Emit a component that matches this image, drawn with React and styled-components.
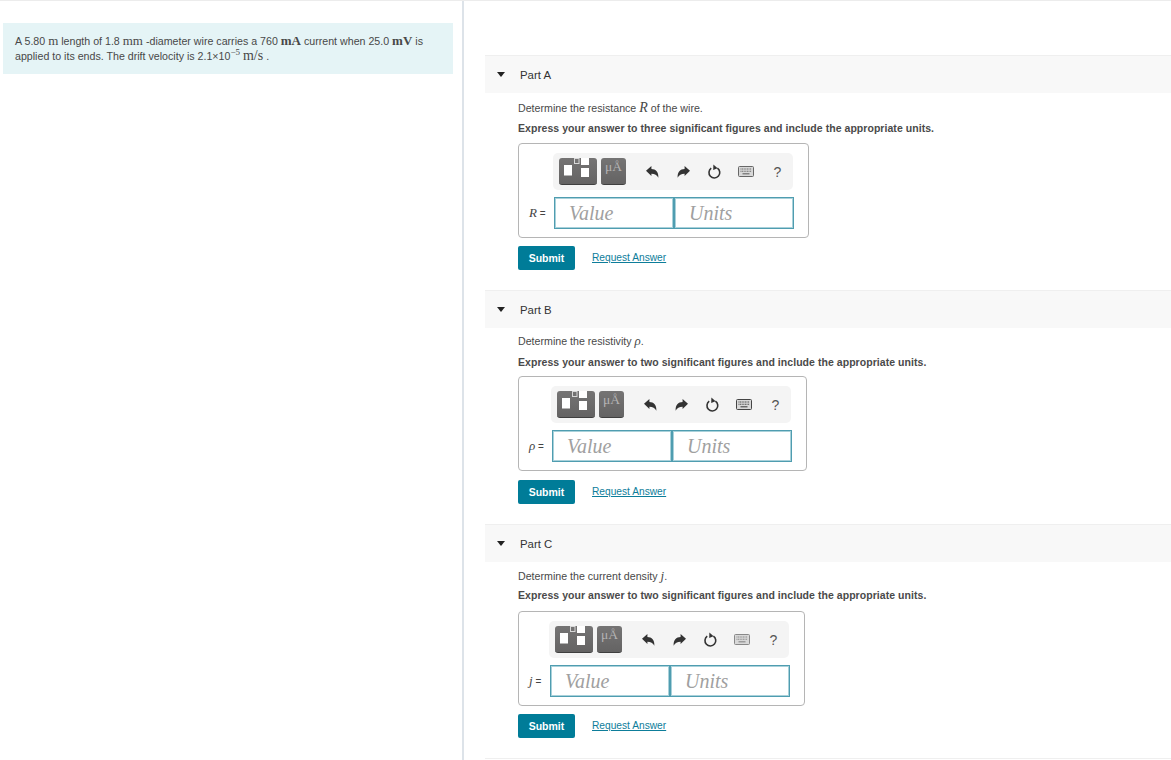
import React from 'react';
import styled, { createGlobalStyle } from 'styled-components';

const GlobalStyle = createGlobalStyle`
  html, body {
    margin: 0;
    padding: 0;
    background: #fff;
    overflow: hidden;
  }
  body {
    font-family: "Liberation Sans", Arial, sans-serif;
    color: #3c3c3c;
  }
`;

const Page = styled.div`
  display: grid;
  grid-template-columns: 464px 1fr;
  width: 1171px;
  height: 760px;
  box-sizing: border-box;
  border-top: 1px solid #ececec;
  overflow: hidden;
`;

const LeftPane = styled.div`
  box-sizing: border-box;
  padding: 22px 9px 0 3px;
  border-right: 2px solid #dde3e9;
`;

const Intro = styled.div`
  box-sizing: border-box;
  height: 51px;
  padding: 11px 12px 0;
  background: #e5f4f6;
  font-size: 10.65px;
  line-height: 15px;
  color: #484848;
`;

const M = styled.span`
  font-family: "Liberation Serif", serif;
  font-size: ${p => p.$size || 13}px;
  line-height: 0;
  font-weight: ${p => (p.$bold ? 700 : 400)};
  font-style: ${p => (p.$italic ? 'italic' : 'normal')};
`;

const Sup = styled.sup`
  font-size: 9px;
  line-height: 0;
  font-family: "Liberation Serif", serif;
`;

const RightPane = styled.div`
  padding: 54px 0 0 21px;
`;

const Part = styled.section`
  height: ${p => p.$height}px;
`;

const PartHeader = styled.div`
  display: flex;
  align-items: center;
  height: 37px;
  border-top: 1px solid #efefef;
  background: #f8f8f8;
  font-size: 11.4px;
  color: #333;
`;

const Caret = styled.span`
  width: 0;
  height: 0;
  margin: 0 15px 0 12px;
  border-left: 4.5px solid transparent;
  border-right: 4.5px solid transparent;
  border-top: 5px solid #222;
`;

const PartBody = styled.div`
  padding: ${p => p.$top}px 0 0 33px;
`;

const Question = styled.div`
  height: 14px;
  font-size: 10.65px;
  line-height: 14px;
  color: #484848;
`;

const Instruction = styled.div`
  margin: ${p => p.$above}px 0 ${p => p.$below}px;
  font-size: 10.5px;
  line-height: 14px;
  font-weight: 700;
  color: #4a4a4a;
  letter-spacing: 0.05px;
`;

// the box hugs its content, so it narrows along with the label column
const AnswerBox = styled.div`
  box-sizing: border-box;
  width: ${p => p.$indent + 256}px;
  height: 95px;
  padding: 9px 0 0 ${p => p.$indent}px;
  border: 1px solid #b5b5b5;
  border-radius: 4px;
`;

const Toolbar = styled.div`
  display: flex;
  align-items: center;
  box-sizing: border-box;
  width: 240px;
  height: 37px;
  margin-left: -1px;
  padding-left: 6px;
  background: #f4f4f4;
  border-radius: 5px;
`;

const DarkButton = styled.div`
  display: flex;
  justify-content: center;
  box-sizing: border-box;
  width: ${p => p.$width}px;
  height: 27px;
  margin-right: 4px;
  border-radius: 3px;
  background: linear-gradient(#757474, #646363);
  border-bottom: 1px solid #3f3f3f;
  color: #b4b4b4;
  font-family: "Liberation Serif", serif;
  font-size: 13.5px;
  line-height: 17px;
`;

const ToolIcons = styled.div`
  display: flex;
  align-items: center;
  flex: 1;
  padding-left: 6.5px;
`;

const ToolIcon = styled.span`
  display: flex;
  justify-content: center;
  align-items: center;
  width: 31.3px;
  height: 26px;
  color: ${p => p.$color || '#333'};
  font-size: 14px;
`;

const Row = styled.div`
  display: flex;
  align-items: center;
  margin-top: 7px;
  margin-left: ${p => -p.$indent}px;
`;

const RowLabel = styled.div`
  box-sizing: border-box;
  width: ${p => p.$indent}px;
  padding-left: 10px;
  font-size: 10px;
  color: #444;
  white-space: nowrap;
`;

const LabelVar = styled.span`
  font-family: "Liberation Serif", serif;
  font-style: italic;
  font-size: 13px;
`;

const Field = styled.div`
  box-sizing: border-box;
  width: 120px;
  height: 32px;
  padding-left: 14px;
  border: 1px solid #4f9db0;
  box-shadow: inset 0 0 0 1px #a9d1da;
  font-family: "Liberation Serif", serif;
  font-style: italic;
  font-size: 20px;
  line-height: 31px;
  color: #a0a0a0;
`;

const Actions = styled.div`
  display: flex;
  align-items: center;
  margin-top: ${p => p.$gap}px;
`;

const Submit = styled.button`
  width: 57px;
  height: 24px;
  padding: 0;
  border: 0;
  border-radius: 2px;
  background: #007c98;
  color: #fff;
  font-family: "Liberation Sans", Arial, sans-serif;
  font-size: 10.5px;
  font-weight: 700;
`;

const RequestLink = styled.a`
  margin: 0 0 2px 17px;
  color: #0d7d9a;
  font-size: 10.2px;
  text-decoration: underline;
`;

const BottomRule = styled.div`
  border-top: 1px solid #efefef;
`;

function TemplateIcon() {
  return (
    <svg width="37" height="26" viewBox="0 0 37 26">
      <rect x="5" y="7" width="8" height="10.5" fill="#fff" />
      <rect x="15.5" y="0.5" width="4.5" height="5" fill="none" stroke="#d8d8d8" strokeWidth="1" />
      <rect x="22" y="0" width="8" height="7" fill="#fff" />
      <rect x="22" y="10" width="8" height="9" fill="#fff" />
    </svg>
  );
}

function UndoIcon({ flip }) {
  return (
    <svg width="13" height="12" viewBox="0 0 12 11" style={flip ? { transform: 'scaleX(-1)' } : undefined}>
      <path d="M0 4.4 L5 0 V2.7 C9 2.8 11.8 5.4 11.4 10.8 C10.2 8 8 7 5 7 V9.2 Z" fill="#333" />
    </svg>
  );
}

function ResetIcon() {
  return (
    <svg width="15" height="16" viewBox="0 0 15 16">
      <path d="M4.2 4.2 A5.4 5.4 0 1 0 10.4 4.1" fill="none" stroke="#333" strokeWidth="1.6" />
      <path d="M6.4 0.6 L10.6 4.2 L6.2 6 Z" fill="#333" />
    </svg>
  );
}

function KeyboardIcon({ color }) {
  return (
    <svg width="16" height="11" viewBox="0 0 16 11">
      <rect x="0.5" y="0.5" width="15" height="10" rx="1" fill="#d8d8d8" stroke={color} />
      <path d="M2.5 3h11M2.5 5.2h11" stroke={color} strokeWidth="1.1" strokeDasharray="1 .6" />
      <path d="M4.5 7.8h7" stroke={color} strokeWidth="1.1" />
    </svg>
  );
}

const parts = [
  {
    title: 'Part A',
    height: 235,
    question: <>Determine the resistance <M $italic $size={14}>R</M> of the wire.</>,
    instruction: 'Express your answer to three significant figures and include the appropriate units.',
    label: 'R',
    indent: 35,
    top: 8,
    above: 6,
    below: 8,
    gap: 8,
    keyColor: '#666',
  },
  {
    title: 'Part B',
    height: 234,
    question: <>Determine the resistivity <M $italic>ρ</M>.</>,
    instruction: 'Express your answer to two significant figures and include the appropriate units.',
    label: 'ρ',
    indent: 33,
    top: 6,
    above: 7,
    below: 7,
    gap: 9,
    keyColor: '#444',
  },
  {
    title: 'Part C',
    height: 234,
    question: <>Determine the current density <M $italic>j</M>.</>,
    instruction: 'Express your answer to two significant figures and include the appropriate units.',
    label: 'j',
    indent: 31,
    top: 7,
    above: 5,
    below: 9,
    gap: 8,
    keyColor: '#888',
  },
];

export default function App() {
  return (
    <>
      <GlobalStyle />
      <Page>
        <LeftPane>
          <Intro>
            A 5.80 <M>m</M> length of 1.8 <M>mm</M> -diameter wire carries a 760 <M $bold>mA</M> current when 25.0 <M $bold>mV</M> is
            <br />
            applied to its ends. The drift velocity is 2.1×10<Sup>−5</Sup> <M $size={14}>m/s</M> .
          </Intro>
        </LeftPane>
        <RightPane>
          {parts.map(part => (
            <Part key={part.title} $height={part.height}>
              <PartHeader>
                <Caret />
                {part.title}
              </PartHeader>
              <PartBody $top={part.top}>
                <Question>{part.question}</Question>
                <Instruction $above={part.above} $below={part.below}>{part.instruction}</Instruction>
                <AnswerBox $indent={part.indent}>
                  <Toolbar>
                    <DarkButton $width={39}>
                      <TemplateIcon />
                    </DarkButton>
                    <DarkButton $width={26}>μÅ</DarkButton>
                    <ToolIcons>
                      <ToolIcon><UndoIcon /></ToolIcon>
                      <ToolIcon><UndoIcon flip /></ToolIcon>
                      <ToolIcon><ResetIcon /></ToolIcon>
                      <ToolIcon><KeyboardIcon color={part.keyColor} /></ToolIcon>
                      <ToolIcon $color="#555">?</ToolIcon>
                    </ToolIcons>
                  </Toolbar>
                  <Row $indent={part.indent}>
                    <RowLabel $indent={part.indent}>
                      <LabelVar>{part.label}</LabelVar> =
                    </RowLabel>
                    <Field>Value</Field>
                    <Field>Units</Field>
                  </Row>
                </AnswerBox>
                <Actions $gap={part.gap}>
                  <Submit>Submit</Submit>
                  <RequestLink href="#">Request Answer</RequestLink>
                </Actions>
              </PartBody>
            </Part>
          ))}
          <BottomRule />
        </RightPane>
      </Page>
    </>
  );
}
